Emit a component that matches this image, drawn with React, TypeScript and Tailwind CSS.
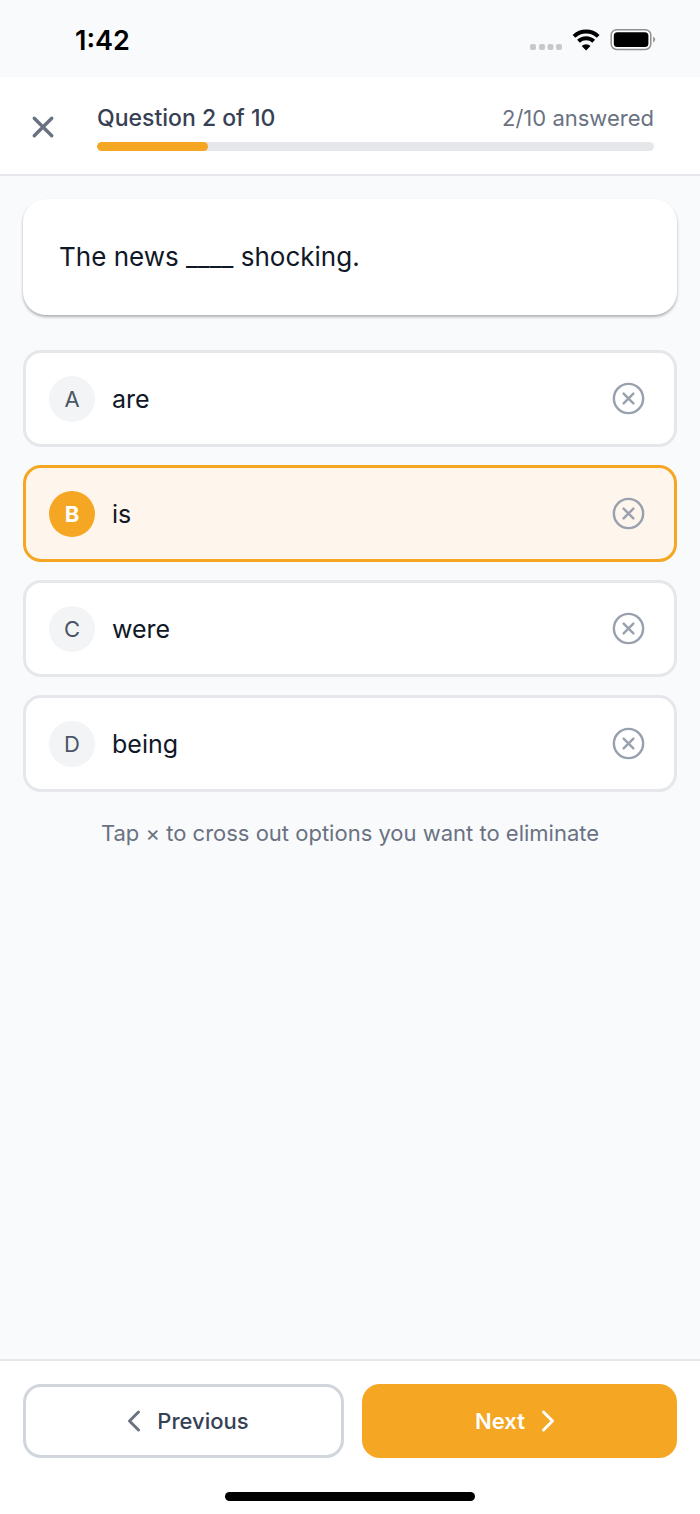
import { useState } from "react";

const options = [
  { letter: "A", text: "are" },
  { letter: "B", text: "is" },
  { letter: "C", text: "were" },
  { letter: "D", text: "being" },
];

function CloseIcon() {
  return (
    <svg viewBox="0 0 512 512" className="size-10" fill="none" stroke="currentColor" strokeWidth="44" strokeLinecap="round" strokeLinejoin="round" aria-hidden="true">
      <path d="M368 368L144 144M368 144L144 368" />
    </svg>
  );
}

function CloseCircleIcon() {
  return (
    <svg viewBox="0 0 512 512" className="size-[39px]" fill="none" stroke="currentColor" strokeWidth="32" aria-hidden="true">
      <circle cx="256" cy="256" r="192" />
      <path d="M320 320L192 192M192 320l128-128" strokeLinecap="round" strokeLinejoin="round" />
    </svg>
  );
}

function Chevron({ d }: { d: string }) {
  return (
    <svg viewBox="0 0 512 512" className="size-8" fill="none" stroke="currentColor" strokeWidth="48" strokeLinecap="round" strokeLinejoin="round" aria-hidden="true">
      <path d={d} />
    </svg>
  );
}

function StatusBar() {
  return (
    <div className="flex h-[77px] items-center justify-between pr-11 pl-[75px]">
      <span className="pt-1 text-[27px] leading-8 font-semibold text-black">1:42</span>
      <svg viewBox="0 0 128 28" className="h-7 w-32" aria-hidden="true">
        <g fill="#c7c8ca">
          <rect x="2" y="19" width="6" height="6" rx="2" />
          <rect x="11" y="19" width="6" height="6" rx="2" />
          <rect x="19.500" y="19" width="6" height="6" rx="2" />
          <rect x="28" y="19" width="6" height="6" rx="2" />
        </g>
        <g fill="none" stroke="#000" strokeWidth="4">
          <path d="M46 11.400a17.500 17.500 0 0 1 24.200 0" />
          <path d="M50.500 16.200a11 11 0 0 1 15.200 0" />
        </g>
        <path d="M58.100 25.400l-4.400-4.400a6.400 6.400 0 0 1 8.800 0z" fill="#000" />
        <rect x="83.200" y="4.700" width="39.600" height="19.800" rx="5.500" fill="#fff" stroke="#8e8f91" strokeWidth="1.500" />
        <rect x="85.800" y="7.200" width="34.600" height="14.800" rx="3.500" fill="#000" />
        <path d="M125.200 11.600a3.300 3.300 0 0 1 0 6z" fill="#8e8f91" />
      </svg>
    </div>
  );
}

export default function App() {
  const [selected, setSelected] = useState("B");
  const [crossed, setCrossed] = useState<string[]>([]);

  const toggleCrossed = (letter: string) =>
    setCrossed((list) => (list.includes(letter) ? list.filter((l) => l !== letter) : [...list, letter]));

  return (
    <div className="flex min-h-dvh flex-col bg-[#f9fafc] font-[Inter,sans-serif]">
      <StatusBar />

      <header className="flex items-center gap-[34px] border-b-2 border-gray-200 bg-white pt-[25px] pr-[46px] pb-[23px] pl-[23px]">
        <button type="button" aria-label="Close quiz" className="shrink-0 text-gray-500">
          <CloseIcon />
        </button>
        <div className="flex-1">
          <div className="flex items-center justify-between leading-8">
            <h1 className="text-[23px] font-medium text-gray-700">Question 2 of 10</h1>
            <span className="text-[22px] text-gray-500">2/10 answered</span>
          </div>
          <div className="mt-2 h-[9px] overflow-hidden rounded-full bg-gray-200">
            <div className="h-full w-1/5 rounded-full bg-[#f5a623]" />
          </div>
        </div>
      </header>

      <main className="flex-1 px-[23px] pt-[23px]">
        <div className="rounded-[23px] bg-white px-9 py-[38px] shadow-[0_2px_3px_rgba(0,0,0,0.3)]">
          <p className="text-[26px] leading-10 text-gray-900">The news ____ shocking.</p>
        </div>

        <div role="radiogroup" aria-label="Answers" className="mt-[35px] flex flex-col gap-[18px]">
          {options.map(({ letter, text }) => {
            const isSelected = selected === letter;
            return (
              <div
                key={letter}
                className={`flex h-[97px] items-center rounded-[18px] border-3 pr-[26px] pl-[23px] ${
                  isSelected ? "border-[#f5a623] bg-[#fef6ec]" : "border-gray-200 bg-white"
                }`}
              >
                <label className="flex flex-1 cursor-pointer items-center gap-[17px]">
                  <input
                    type="radio"
                    name="answer"
                    value={letter}
                    checked={isSelected}
                    onChange={() => setSelected(letter)}
                    className="sr-only"
                  />
                  <span
                    className={`flex size-[46px] items-center justify-center rounded-full text-[22px] leading-8 ${
                      isSelected ? "bg-[#f5a623] font-bold text-white" : "bg-gray-100 text-gray-600"
                    }`}
                  >
                    {letter}
                  </span>
                  <span className={`text-[25px] leading-9 text-gray-900 ${crossed.includes(letter) ? "line-through opacity-50" : ""}`}>
                    {text}
                  </span>
                </label>
                <button type="button" aria-label={`Cross out option ${letter}`} onClick={() => toggleCrossed(letter)} className="text-gray-400">
                  <CloseCircleIcon />
                </button>
              </div>
            );
          })}
        </div>

        <p className="mt-[25px] text-center text-[22px] leading-8 text-gray-500">Tap × to cross out options you want to eliminate</p>
      </main>

      <footer className="border-t-2 border-gray-200 bg-white px-[23px] pt-[23px] pb-[13px]">
        <div className="flex h-[74px] gap-[18px]">
          <button type="button" className="flex flex-1 items-center justify-center gap-[7px] rounded-[18px] border-3 border-gray-300 bg-white text-gray-500">
            <Chevron d="M328 112L184 256l144 144" />
            <span className="text-[22px] leading-8 font-medium text-gray-700">Previous</span>
          </button>
          <button type="button" className="flex flex-1 items-center justify-center gap-[7px] rounded-[18px] bg-[#f5a623] text-white">
            <span className="text-[22px] leading-8 font-semibold">Next</span>
            <Chevron d="M184 112l144 144-144 144" />
          </button>
        </div>
        <div className="mx-auto mt-[34px] h-[9px] w-[250px] rounded-full bg-black" />
      </footer>
    </div>
  );
}
